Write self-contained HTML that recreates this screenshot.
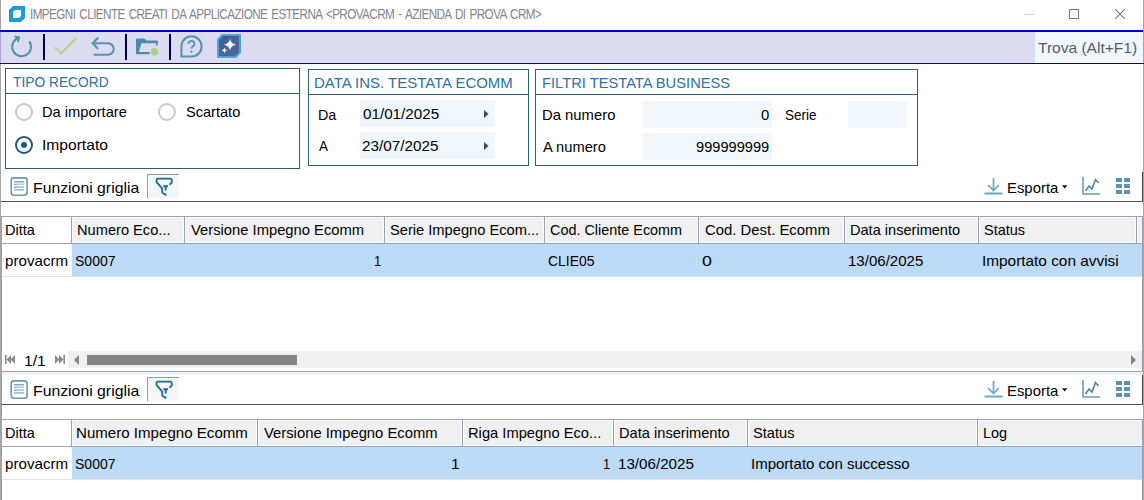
<!DOCTYPE html>
<html><head><meta charset="utf-8">
<style>
*{margin:0;padding:0;box-sizing:border-box}
html,body{width:1144px;height:500px;overflow:hidden;background:#fff}
body{position:relative;font-family:"Liberation Sans",sans-serif;color:#111;font-size:14.5px}
.a{position:absolute}
.t{position:absolute;white-space:nowrap;line-height:17px;height:17px;transform-origin:0 0}
.hl{position:absolute;height:1px}
.vl{position:absolute;width:1px}
</style></head><body>

<!-- window borders -->
<div class="a" style="left:0;top:0;width:1px;height:500px;background:#a6a6a6"></div>
<div class="a" style="left:1143px;top:0;width:1px;height:500px;background:#a6a6a6"></div>

<!-- title bar -->
<svg class="a" style="left:9px;top:6px" width="16" height="16" viewBox="0 0 16 16">
  <path d="M4 0H16V12L12 16H0V4Z" fill="#1b9bd7"/>
  <path d="M6 4H12V10L10 12H4V6Z" fill="#fff"/>
</svg>
<div class="a" style="left:1024px;top:14px;width:10px;height:1px;background:#cfcfcf"></div>
<div class="a" style="left:1069px;top:9px;width:10px;height:10px;border:1px solid #7a7a7a"></div>
<svg class="a" style="left:1115px;top:9px" width="10" height="10" viewBox="0 0 10 10"><path d="M0 0L10 10M10 0L0 10" stroke="#7a7a7a" stroke-width="1.1"/></svg>

<!-- toolbar -->
<div class="a" style="left:0;top:30px;width:1143px;height:2px;background:#0000c4"></div>
<div class="a" style="left:1px;top:32px;width:1142px;height:31px;background:#dcdcf0"></div>
<div class="a" style="left:0;top:32px;width:1px;height:31px;background:#a8a8e8"></div>
<div class="a" style="left:0;top:63px;width:1144px;height:1px;background:#12123c"></div>
<div class="a" style="left:43px;top:34px;width:2px;height:26px;background:#000050"></div>
<div class="a" style="left:125px;top:34px;width:2px;height:26px;background:#000050"></div>
<div class="a" style="left:169px;top:34px;width:2px;height:26px;background:#000050"></div>
<div class="a" style="left:1035px;top:32px;width:108px;height:31px;background:#f1f8fd"></div>

<!-- icons toolbar -->
<svg class="a" style="left:0;top:0" width="250" height="64" viewBox="0 0 250 64">
  <path d="M18.8 37.8A9.4 9.4 0 1 0 29.2 41.2" fill="none" stroke="#558fae" stroke-width="2"/>
  <path d="M14.4 36.4L19.1 37.5L17.9 42" fill="none" stroke="#558fae" stroke-width="2" stroke-linejoin="miter"/>
  <path d="M54.8 47.2L61 53.4L76.3 38.3" fill="none" stroke="#b4da92" stroke-width="2.3"/>
  <path d="M98.3 37.6L92.6 43.3L98.3 49M92.8 43.3H108A5.75 5.75 0 0 1 108 54.8H93.6" fill="none" stroke="#5890b0" stroke-width="2.1"/>
  <path d="M136 54.2V39.4Q136 38.4 137 38.4H144.3L146.5 40.6H156.8Q158.8 40.6 158.2 42.6L157.2 45.6H155.6L156.2 43.2H141.5L138.8 52H149.5V54.2Z" fill="#4f8aaa"/>
  <circle cx="154.5" cy="51.7" r="3.8" fill="#a6d776"/>
  <path d="M191.5 36.3A10.1 10.1 0 1 1 191.5 56.5H181.4V46.4A10.1 10.1 0 0 1 191.5 36.3Z" fill="none" stroke="#5b8fad" stroke-width="2"/>
  <path d="M188.5 43.8A3 3 0 1 1 192.6 46.6Q191.5 47.2 191.5 48.6" fill="none" stroke="#5b8fad" stroke-width="1.8"/>
  <circle cx="191.5" cy="51.6" r="1.1" fill="#5b8fad"/>
  <defs><linearGradient id="ai" x1="0" y1="0" x2="1" y2="1"><stop offset="0" stop-color="#3c5c96"/><stop offset="1" stop-color="#56699c"/></linearGradient></defs>
  <path d="M222 34H241V53L236 58H217V39Z" fill="#4aa6da"/>
  <path d="M223 36H239V52.2L235.2 56H219V40Z" fill="url(#ai)"/>
  <path d="M230 38.6Q230.6 43.6 236.1 44.7Q230.6 45.8 230 50.8Q229.4 45.8 223.9 44.7Q229.4 43.6 230 38.6Z" fill="#f4f4fc"/>
  <path d="M224.4 47.4Q224.8 49.8 227.3 50.3Q224.8 50.8 224.4 53.2Q224 50.8 221.5 50.3Q224 49.8 224.4 47.4Z" fill="#f4f4fc"/>
</svg>

<!-- TIPO RECORD box -->
<div class="a" style="left:5px;top:68px;width:295px;height:101px;border:1px solid #2d6073"></div>
<div class="a" style="left:6px;top:93px;width:293px;height:1px;background:#2d6073"></div>
<div class="a" style="left:15px;top:103px;width:18px;height:18px;border-radius:50%;border:2px solid #c9c9c9"></div>
<div class="a" style="left:158px;top:103px;width:18px;height:18px;border-radius:50%;border:2px solid #c9c9c9"></div>
<div class="a" style="left:15px;top:136px;width:18px;height:18px;border-radius:50%;border:2px solid #1b5a7e"></div>
<div class="a" style="left:21px;top:142px;width:6px;height:6px;border-radius:50%;background:#1b5a7e"></div>

<!-- DATA INS box -->
<div class="a" style="left:308px;top:69px;width:221px;height:97px;border:1px solid #2d6073"></div>
<div class="a" style="left:309px;top:94px;width:219px;height:1px;background:#2d6073"></div>
<div class="a" style="left:360px;top:100px;width:135px;height:27px;background:#f1f8fd"></div>
<svg class="a" style="left:484px;top:110px" width="5" height="8"><path d="M0 0L4.5 4L0 8Z" fill="#3f4a62"/></svg>
<div class="a" style="left:360px;top:132px;width:135px;height:27px;background:#f1f8fd"></div>
<svg class="a" style="left:484px;top:142px" width="5" height="8"><path d="M0 0L4.5 4L0 8Z" fill="#3f4a62"/></svg>

<!-- FILTRI box -->
<div class="a" style="left:535px;top:69px;width:383px;height:97px;border:1px solid #2d6073"></div>
<div class="a" style="left:536px;top:94px;width:381px;height:1px;background:#2d6073"></div>
<div class="a" style="left:643px;top:101px;width:129px;height:27px;background:#f1f8fd"></div>
<div class="a" style="left:848px;top:101px;width:59px;height:27px;background:#f1f8fd"></div>
<div class="a" style="left:643px;top:133px;width:129px;height:27px;background:#f1f8fd"></div>


<!-- GRID 1 toolbar -->
<svg class="a" style="left:8px;top:174px" width="22" height="24" viewBox="0 0 22 24">
  <rect x="3.2" y="3.9" width="15.9" height="17.3" rx="2.6" fill="none" stroke="#6b98b2" stroke-width="1.6"/>
  <path d="M6 7.7H16M6 10.4H16M6 13.2H16M6 15.9H16" stroke="#8aaabd" stroke-width="1.4"/>
  <path d="M8.8 10.4H16M8.8 13.2H16" stroke="#a6d2ea" stroke-width="1.4"/>
</svg>
<div class="a" style="left:147px;top:174px;width:32px;height:24px;border-left:1px solid #9a9a9a;border-top:1px solid #9a9a9a;background:#f4f6f8"></div>
<svg class="a" style="left:150px;top:174px" width="28" height="26" viewBox="0 0 28 26">
  <path d="M19.3 10.6Q21.8 9.6 21.8 8V6.3Q21.8 4.7 20.2 4.7H8.1Q6.5 4.7 6.5 6.3V7.9L12.2 14.6V18.4L15.6 20.9V19.6" fill="none" stroke="#1d6a92" stroke-width="1.8" stroke-linejoin="round"/>
  <path d="M13.3 12.2H18M15.65 12.2V16.6" fill="none" stroke="#1d6a92" stroke-width="1.9"/>
</svg>
<svg class="a" style="left:984px;top:177px" width="19" height="18" viewBox="0 0 19 18">
  <path d="M9.5 1V13.5M4 8L9.5 13.5L15 8" fill="none" stroke="#6fa7c4" stroke-width="1.7"/>
  <path d="M0.5 16.5H18.5" stroke="#6fa7c4" stroke-width="2"/>
</svg>
<svg class="a" style="left:1062px;top:185px" width="6" height="4"><path d="M0 0.3H5.4L2.7 3.6Z" fill="#111"/></svg>
<svg class="a" style="left:1082px;top:177px" width="19" height="18" viewBox="0 0 19 18">
  <path d="M1 0V17H18" fill="none" stroke="#6d9ab5" stroke-width="1.6"/>
  <path d="M3.5 14L7 9L10 12L13.5 2.5L16.5 6" fill="none" stroke="#4e86a6" stroke-width="1.6"/>
</svg>
<svg class="a" style="left:1116px;top:178px" width="15" height="16" viewBox="0 0 15 16">
  <path d="M0 0H6V4H0ZM8 0H14V4H8ZM0 6H6V10H0ZM8 6H14V10H8ZM0 12H6V16H0ZM8 12H14V16H8Z" fill="#5a93b0"/>
</svg>
<div class="a" style="left:1px;top:201px;width:1142px;height:1px;background:#555"></div>
<div class="a" style="left:1142px;top:172px;width:1px;height:30px;background:#444"></div>

<!-- GRID 1 -->
<div class="a" style="left:1px;top:216px;width:1142px;height:1px;background:#97a3b5"></div>
<div class="a" style="left:72px;top:217px;width:1070px;height:26px;background:#f0f0f0"></div>
<div class="a" style="left:72px;top:217px;width:1070px;height:1px;background:#fafbfd"></div>
<div class="a" style="left:72px;top:242px;width:1070px;height:1px;background:#fafbfd"></div>
<div class="vl" style="left:72px;top:217px;height:26px;background:#fafbfd"></div>
<div class="vl" style="left:183px;top:217px;height:26px;background:#fafbfd"></div>
<div class="vl" style="left:185px;top:217px;height:26px;background:#fafbfd"></div>
<div class="vl" style="left:383px;top:217px;height:26px;background:#fafbfd"></div>
<div class="vl" style="left:385px;top:217px;height:26px;background:#fafbfd"></div>
<div class="vl" style="left:543px;top:217px;height:26px;background:#fafbfd"></div>
<div class="vl" style="left:545px;top:217px;height:26px;background:#fafbfd"></div>
<div class="vl" style="left:697px;top:217px;height:26px;background:#fafbfd"></div>
<div class="vl" style="left:699px;top:217px;height:26px;background:#fafbfd"></div>
<div class="vl" style="left:843px;top:217px;height:26px;background:#fafbfd"></div>
<div class="vl" style="left:845px;top:217px;height:26px;background:#fafbfd"></div>
<div class="vl" style="left:977px;top:217px;height:26px;background:#fafbfd"></div>
<div class="vl" style="left:979px;top:217px;height:26px;background:#fafbfd"></div>
<div class="vl" style="left:1135px;top:217px;height:26px;background:#fafbfd"></div>
<div class="vl" style="left:1137px;top:217px;height:26px;background:#fafbfd"></div>
<div class="a" style="left:1px;top:243px;width:1142px;height:1px;background:#97a3b5"></div>
<div class="a" style="left:72px;top:244px;width:1070px;height:32px;background:#bddaf6"></div>
<div class="vl" style="left:71px;top:216px;height:28px;background:#97a3b5"></div>
<div class="vl" style="left:184px;top:216px;height:28px;background:#97a3b5"></div>
<div class="vl" style="left:384px;top:216px;height:28px;background:#97a3b5"></div>
<div class="vl" style="left:544px;top:216px;height:28px;background:#97a3b5"></div>
<div class="vl" style="left:698px;top:216px;height:28px;background:#97a3b5"></div>
<div class="vl" style="left:844px;top:216px;height:28px;background:#97a3b5"></div>
<div class="vl" style="left:978px;top:216px;height:28px;background:#97a3b5"></div>
<div class="vl" style="left:1136px;top:216px;height:28px;background:#97a3b5"></div>
<div class="vl" style="left:1142px;top:216px;height:156px;background:#97a3b5"></div>
<div class="vl" style="left:1px;top:216px;height:284px;background:#97a3b5"></div>
<div class="a" style="left:2px;top:276px;width:1140px;height:1px;background:#e2e2e2"></div>
<div class="a" style="left:2px;top:479px;width:1140px;height:1px;background:#e2e2e2"></div>
<!-- pager + scrollbar -->
<svg class="a" style="left:5px;top:355px" width="10" height="9" viewBox="0 0 10 9"><path d="M0 0H1.6V9H0ZM6 0V9L1.6 4.5ZM10 0V9L5.6 4.5Z" fill="#8a8a8a"/></svg>
<svg class="a" style="left:55px;top:355px" width="10" height="9" viewBox="0 0 10 9"><path d="M10 0H8.4V9H10ZM4 0V9L8.4 4.5ZM0 0V9L4.4 4.5Z" fill="#8a8a8a"/></svg>
<div class="a" style="left:68px;top:351px;width:1074px;height:17px;background:#f0f0f0"></div>
<svg class="a" style="left:74px;top:355px" width="5" height="10"><path d="M5 0V10L0 5Z" fill="#858585"/></svg>
<div class="a" style="left:87px;top:355px;width:210px;height:10px;background:#858585"></div>
<svg class="a" style="left:1131px;top:355px" width="5" height="10"><path d="M0 0V10L5 5Z" fill="#858585"/></svg>
<div class="a" style="left:1px;top:371px;width:1142px;height:1px;background:#97a3b5"></div>
<div class="a" style="left:2px;top:372px;width:1140px;height:3px;background:#f3f3f3"></div>

<!-- GRID 2 toolbar -->
<svg class="a" style="left:8px;top:377px" width="22" height="24" viewBox="0 0 22 24">
  <rect x="3.2" y="3.9" width="15.9" height="17.3" rx="2.6" fill="none" stroke="#6b98b2" stroke-width="1.6"/>
  <path d="M6 7.7H16M6 10.4H16M6 13.2H16M6 15.9H16" stroke="#8aaabd" stroke-width="1.4"/>
  <path d="M8.8 10.4H16M8.8 13.2H16" stroke="#a6d2ea" stroke-width="1.4"/>
</svg>
<div class="a" style="left:147px;top:377px;width:32px;height:24px;border-left:1px solid #9a9a9a;border-top:1px solid #9a9a9a;background:#f4f6f8"></div>
<svg class="a" style="left:150px;top:377px" width="28" height="26" viewBox="0 0 28 26">
  <path d="M19.3 10.6Q21.8 9.6 21.8 8V6.3Q21.8 4.7 20.2 4.7H8.1Q6.5 4.7 6.5 6.3V7.9L12.2 14.6V18.4L15.6 20.9V19.6" fill="none" stroke="#1d6a92" stroke-width="1.8" stroke-linejoin="round"/>
  <path d="M13.3 12.2H18M15.65 12.2V16.6" fill="none" stroke="#1d6a92" stroke-width="1.9"/>
</svg>
<svg class="a" style="left:984px;top:380px" width="19" height="18" viewBox="0 0 19 18">
  <path d="M9.5 1V13.5M4 8L9.5 13.5L15 8" fill="none" stroke="#6fa7c4" stroke-width="1.7"/>
  <path d="M0.5 16.5H18.5" stroke="#6fa7c4" stroke-width="2"/>
</svg>
<svg class="a" style="left:1062px;top:388px" width="6" height="4"><path d="M0 0.3H5.4L2.7 3.6Z" fill="#111"/></svg>
<svg class="a" style="left:1082px;top:380px" width="19" height="18" viewBox="0 0 19 18">
  <path d="M1 0V17H18" fill="none" stroke="#6d9ab5" stroke-width="1.6"/>
  <path d="M3.5 14L7 9L10 12L13.5 2.5L16.5 6" fill="none" stroke="#4e86a6" stroke-width="1.6"/>
</svg>
<svg class="a" style="left:1116px;top:381px" width="15" height="16" viewBox="0 0 15 16">
  <path d="M0 0H6V4H0ZM8 0H14V4H8ZM0 6H6V10H0ZM8 6H14V10H8ZM0 12H6V16H0ZM8 12H14V16H8Z" fill="#5a93b0"/>
</svg>
<div class="a" style="left:1px;top:404px;width:1142px;height:1px;background:#555"></div>
<div class="a" style="left:1142px;top:375px;width:1px;height:30px;background:#444"></div>

<!-- GRID 2 -->
<div class="a" style="left:1px;top:419px;width:1142px;height:1px;background:#97a3b5"></div>
<div class="a" style="left:72px;top:420px;width:1070px;height:26px;background:#f0f0f0"></div>
<div class="a" style="left:72px;top:420px;width:1070px;height:1px;background:#fafbfd"></div>
<div class="a" style="left:72px;top:445px;width:1070px;height:1px;background:#fafbfd"></div>
<div class="vl" style="left:72px;top:420px;height:26px;background:#fafbfd"></div>
<div class="vl" style="left:256px;top:420px;height:26px;background:#fafbfd"></div>
<div class="vl" style="left:258px;top:420px;height:26px;background:#fafbfd"></div>
<div class="vl" style="left:461px;top:420px;height:26px;background:#fafbfd"></div>
<div class="vl" style="left:463px;top:420px;height:26px;background:#fafbfd"></div>
<div class="vl" style="left:612px;top:420px;height:26px;background:#fafbfd"></div>
<div class="vl" style="left:614px;top:420px;height:26px;background:#fafbfd"></div>
<div class="vl" style="left:746px;top:420px;height:26px;background:#fafbfd"></div>
<div class="vl" style="left:748px;top:420px;height:26px;background:#fafbfd"></div>
<div class="vl" style="left:976px;top:420px;height:26px;background:#fafbfd"></div>
<div class="vl" style="left:978px;top:420px;height:26px;background:#fafbfd"></div>
<div class="a" style="left:1px;top:446px;width:1142px;height:1px;background:#97a3b5"></div>
<div class="a" style="left:72px;top:447px;width:1070px;height:32px;background:#bddaf6"></div>
<div class="vl" style="left:71px;top:419px;height:28px;background:#97a3b5"></div>
<div class="vl" style="left:257px;top:419px;height:28px;background:#97a3b5"></div>
<div class="vl" style="left:462px;top:419px;height:28px;background:#97a3b5"></div>
<div class="vl" style="left:613px;top:419px;height:28px;background:#97a3b5"></div>
<div class="vl" style="left:747px;top:419px;height:28px;background:#97a3b5"></div>
<div class="vl" style="left:977px;top:419px;height:28px;background:#97a3b5"></div>
<div class="vl" style="left:1142px;top:419px;height:81px;background:#97a3b5"></div>

<div class="t" id="t0" style="left:29.52px;top:5.00px;font-size:13.80px;line-height:20px;height:20px;transform:scaleX(0.8496);color:#85858a;letter-spacing:-0.7px;word-spacing:1.6px">IMPEGNI CLIENTE CREATI DA APPLICAZIONE ESTERNA &lt;PROVACRM - AZIENDA DI PROVA CRM&gt;</div>
<div class="t" id="t1" style="left:1038.37px;top:38.00px;font-size:15.00px;line-height:20px;height:20px;transform:scaleX(1.0352);color:#525a6a">Trova (Alt+F1)</div>
<div class="t" id="t2" style="left:12.85px;top:72.00px;font-size:15.00px;line-height:20px;height:20px;transform:scaleX(0.9176);color:#2d72a0">TIPO RECORD</div>
<div class="t" id="t3" style="left:314.40px;top:73.00px;font-size:15.00px;line-height:20px;height:20px;transform:scaleX(0.9980);color:#2d72a0">DATA INS. TESTATA ECOMM</div>
<div class="t" id="t4" style="left:541.62px;top:73.00px;font-size:15.00px;line-height:20px;height:20px;transform:scaleX(0.9801);color:#2d72a0">FILTRI TESTATA BUSINESS</div>
<div class="t" id="t5" style="left:42.23px;top:102.00px;font-size:15.00px;line-height:20px;height:20px;transform:scaleX(0.9789);color:#000">Da importare</div>
<div class="t" id="t6" style="left:185.81px;top:102.00px;font-size:15.00px;line-height:20px;height:20px;transform:scaleX(0.9711);color:#000">Scartato</div>
<div class="t" id="t7" style="left:42.12px;top:135.00px;font-size:15.00px;line-height:20px;height:20px;transform:scaleX(1.0398);color:#000">Importato</div>
<div class="t" id="t8" style="left:317.85px;top:105.00px;font-size:15.00px;line-height:20px;height:20px;transform:scaleX(0.9564);color:#000">Da</div>
<div class="t" id="t9" style="left:318.82px;top:136.00px;font-size:15.00px;line-height:20px;height:20px;transform:scaleX(0.9000);color:#000">A</div>
<div class="t" id="t10" style="left:362.79px;top:104.00px;font-size:15.00px;line-height:20px;height:20px;transform:scaleX(1.0135);color:#000">01/01/2025</div>
<div class="t" id="t11" style="left:361.80px;top:136.00px;font-size:15.00px;line-height:20px;height:20px;transform:scaleX(1.0203);color:#000">23/07/2025</div>
<div class="t" id="t12" style="left:542.01px;top:105.00px;font-size:15.00px;line-height:20px;height:20px;transform:scaleX(0.9891);color:#000">Da numero</div>
<div class="t" id="t13" style="left:543.00px;top:137.00px;font-size:15.00px;line-height:20px;height:20px;transform:scaleX(0.9797);color:#000">A numero</div>
<div class="t" id="t14" style="left:760.79px;top:105.00px;font-size:15.00px;line-height:20px;height:20px;transform:scaleX(0.9924);color:#000">0</div>
<div class="t" id="t15" style="left:696.23px;top:137.00px;font-size:15.00px;line-height:20px;height:20px;transform:scaleX(0.9744);color:#000">999999999</div>
<div class="t" id="t16" style="left:785.47px;top:105.00px;font-size:15.00px;line-height:20px;height:20px;transform:scaleX(0.9001);color:#000">Serie</div>
<div class="t" id="t17" style="left:32.74px;top:178.00px;font-size:15.00px;line-height:20px;height:20px;transform:scaleX(1.0530);color:#000">Funzioni griglia</div>
<div class="t" id="t18" style="left:1006.81px;top:178.00px;font-size:15.00px;line-height:20px;height:20px;transform:scaleX(0.9922);color:#000">Esporta</div>
<div class="t" id="t19" style="left:23.51px;top:351.00px;font-size:15.00px;line-height:20px;height:20px;transform:scaleX(1.0483);color:#000">1/1</div>
<div class="t" id="t20" style="left:5.01px;top:220.00px;font-size:15.00px;line-height:20px;height:20px;transform:scaleX(0.9704);color:#000">Ditta</div>
<div class="t" id="t21" style="left:77.02px;top:220.00px;font-size:15.00px;line-height:20px;height:20px;transform:scaleX(0.9756);color:#000">Numero Eco...</div>
<div class="t" id="t22" style="left:190.80px;top:220.00px;font-size:15.00px;line-height:20px;height:20px;transform:scaleX(0.9840);color:#000">Versione Impegno Ecomm</div>
<div class="t" id="t23" style="left:390.23px;top:220.00px;font-size:15.00px;line-height:20px;height:20px;transform:scaleX(0.9774);color:#000">Serie Impegno Ecom...</div>
<div class="t" id="t24" style="left:550.04px;top:220.00px;font-size:15.00px;line-height:20px;height:20px;transform:scaleX(0.9603);color:#000">Cod. Cliente Ecomm</div>
<div class="t" id="t25" style="left:704.60px;top:220.00px;font-size:15.00px;line-height:20px;height:20px;transform:scaleX(0.9919);color:#000">Cod. Dest. Ecomm</div>
<div class="t" id="t26" style="left:850.24px;top:220.00px;font-size:15.00px;line-height:20px;height:20px;transform:scaleX(0.9712);color:#000">Data inserimento</div>
<div class="t" id="t27" style="left:984.43px;top:220.00px;font-size:15.00px;line-height:20px;height:20px;transform:scaleX(0.9662);color:#000">Status</div>
<div class="t" id="t28" style="left:5.39px;top:251.00px;font-size:15.00px;line-height:20px;height:20px;transform:scaleX(1.0099);color:#000">provacrm</div>
<div class="t" id="t29" style="left:74.88px;top:251.00px;font-size:15.00px;line-height:20px;height:20px;transform:scaleX(0.9335);color:#000">S0007</div>
<div class="t" id="t30" style="left:373.97px;top:251.00px;font-size:15.00px;line-height:20px;height:20px;transform:scaleX(0.8571);color:#000">1</div>
<div class="t" id="t31" style="left:548.03px;top:251.00px;font-size:15.00px;line-height:20px;height:20px;transform:scaleX(0.9287);color:#000">CLIE05</div>
<div class="t" id="t32" style="left:701.92px;top:251.00px;font-size:15.00px;line-height:20px;height:20px;transform:scaleX(1.1863);color:#000">0</div>
<div class="t" id="t33" style="left:848.19px;top:251.00px;font-size:15.00px;line-height:20px;height:20px;transform:scaleX(1.0029);color:#000">13/06/2025</div>
<div class="t" id="t34" style="left:981.77px;top:251.00px;font-size:15.00px;line-height:20px;height:20px;transform:scaleX(1.0244);color:#000">Importato con avvisi</div>
<div class="t" id="t35" style="left:32.74px;top:381.00px;font-size:15.00px;line-height:20px;height:20px;transform:scaleX(1.0530);color:#000">Funzioni griglia</div>
<div class="t" id="t36" style="left:1006.81px;top:381.00px;font-size:15.00px;line-height:20px;height:20px;transform:scaleX(0.9922);color:#000">Esporta</div>
<div class="t" id="t37" style="left:5.01px;top:423.00px;font-size:15.00px;line-height:20px;height:20px;transform:scaleX(0.9704);color:#000">Ditta</div>
<div class="t" id="t38" style="left:76.19px;top:423.00px;font-size:15.00px;line-height:20px;height:20px;transform:scaleX(1.0060);color:#000">Numero Impegno Ecomm</div>
<div class="t" id="t39" style="left:263.80px;top:423.00px;font-size:15.00px;line-height:20px;height:20px;transform:scaleX(0.9869);color:#000">Versione Impegno Ecomm</div>
<div class="t" id="t40" style="left:468.41px;top:423.00px;font-size:15.00px;line-height:20px;height:20px;transform:scaleX(0.9806);color:#000">Riga Impegno Eco...</div>
<div class="t" id="t41" style="left:619.02px;top:423.00px;font-size:15.00px;line-height:20px;height:20px;transform:scaleX(0.9759);color:#000">Data inserimento</div>
<div class="t" id="t42" style="left:752.83px;top:423.00px;font-size:15.00px;line-height:20px;height:20px;transform:scaleX(0.9756);color:#000">Status</div>
<div class="t" id="t43" style="left:983.02px;top:423.00px;font-size:15.00px;line-height:20px;height:20px;transform:scaleX(0.9658);color:#000">Log</div>
<div class="t" id="t44" style="left:5.39px;top:454.00px;font-size:15.00px;line-height:20px;height:20px;transform:scaleX(1.0099);color:#000">provacrm</div>
<div class="t" id="t45" style="left:74.88px;top:454.00px;font-size:15.00px;line-height:20px;height:20px;transform:scaleX(0.9335);color:#000">S0007</div>
<div class="t" id="t46" style="left:451.35px;top:454.00px;font-size:15.00px;line-height:20px;height:20px;transform:scaleX(1.0435);color:#000">1</div>
<div class="t" id="t47" style="left:602.97px;top:454.00px;font-size:15.00px;line-height:20px;height:20px;transform:scaleX(0.8571);color:#000">1</div>
<div class="t" id="t48" style="left:617.79px;top:454.00px;font-size:15.00px;line-height:20px;height:20px;transform:scaleX(1.0110);color:#000">13/06/2025</div>
<div class="t" id="t49" style="left:751.19px;top:454.00px;font-size:15.00px;line-height:20px;height:20px;transform:scaleX(1.0007);color:#000">Importato con successo</div>
</body></html>
